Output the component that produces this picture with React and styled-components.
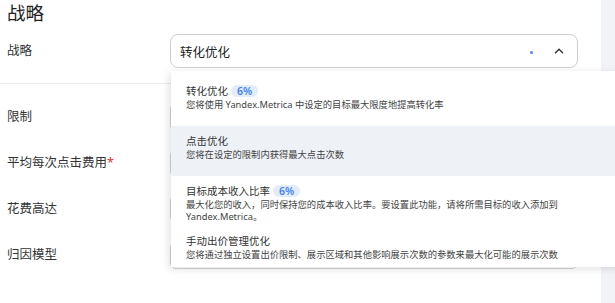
import React from "react";
import styled, { createGlobalStyle } from "styled-components";

const GlobalStyle = createGlobalStyle`
  body {
    margin: 0;
    background: #fff;
    font-family: "Noto Sans", "Noto Sans CJK SC", sans-serif;
    color: #333;
  }
`;

const options = [
  {
    title: "转化优化",
    badge: "6%",
    desc: ["您将使用 Yandex.Metrica 中设定的目标最大限度地提高转化率"],
  },
  {
    title: "点击优化",
    desc: ["您将在设定的限制内获得最大点击次数"],
    active: true,
  },
  {
    title: "目标成本收入比率",
    badge: "6%",
    desc: [
      "最大化您的收入，同时保持您的成本收入比率。要设置此功能，请将所需目标的收入添加到",
      "Yandex.Metrica。",
    ],
  },
  {
    title: "手动出价管理优化",
    desc: ["您将通过独立设置出价限制、展示区域和其他影响展示次数的参数来最大化可能的展示次数"],
  },
];

const fields = [
  { label: "限制" },
  { label: "平均每次点击费用", required: true },
  { label: "花费高达" },
  { label: "归因模型" },
];

const App = () => {
  return (
    <>
      <GlobalStyle />
      <Page>
        <Main>
          <Title>战略</Title>
          <Row>
            <Label>战略</Label>
            <Select>
              <SelectValue>转化优化</SelectValue>
              <Dot />
              <svg width="10" height="6" viewBox="0 0 10 6">
                <path d="M1 5.2 L5 1.2 L9 5.2" fill="none" stroke="#333" strokeWidth="1.4" />
              </svg>
            </Select>
          </Row>
          <Divider />
          <Fields>
            {fields.map((f) => (
              <FieldRow key={f.label}>
                <Label>
                  {f.label}
                  {f.required && <Star>*</Star>}
                </Label>
                <Input />
              </FieldRow>
            ))}
          </Fields>
        </Main>
        <Side />
        <Menu>
          {options.map((o) => (
            <Option key={o.title} active={o.active}>
              <OptionTitle>
                {o.title}
                {o.badge && <Badge>{o.badge}</Badge>}
              </OptionTitle>
              {o.desc.map((d) => (
                <OptionDesc key={d}>{d}</OptionDesc>
              ))}
            </Option>
          ))}
        </Menu>
      </Page>
    </>
  );
};

export default App;

const Page = styled("div")`
  position: relative;
  display: flex;
  width: 615px;
  height: 303px;
  overflow: hidden;
`;

const Main = styled("div")`
  width: 601px;
  box-sizing: border-box;
  padding-left: 7px;
`;

const Side = styled("div")`
  width: 14px;
  background: #f1f3f6;
`;

const Title = styled("h2")`
  margin: 0;
  padding-top: 1px;
  font-size: 18.5px;
  line-height: 24px;
  font-weight: 400;
  color: #222;
`;

const Row = styled("div")`
  display: flex;
  align-items: center;
  margin-top: 9px;
`;

const Label = styled("div")`
  width: 163px;
  font-size: 12.5px;
  line-height: 16px;
  color: #333;
`;

const Star = styled("span")`
  color: #e5352b;
`;

const Select = styled("div")`
  width: 408px;
  height: 34px;
  box-sizing: border-box;
  border: 1px solid #cfcfcf;
  border-radius: 8px;
  display: flex;
  align-items: center;
  padding: 0 13px 0 9px;
`;

const SelectValue = styled("div")`
  flex: 1;
  font-size: 12.5px;
  color: #222;
`;

const Dot = styled("span")`
  width: 3px;
  height: 3px;
  border-radius: 50%;
  background: #4a86f7;
  margin: 2px 21px 0 0;
`;

const Divider = styled("div")`
  height: 1px;
  background: #ececec;
  margin: 15px 0 0 -7px;
`;

const Fields = styled("div")`
  display: flex;
  flex-direction: column;
  padding-top: 10px;
`;

const FieldRow = styled("div")`
  display: flex;
  align-items: center;
  height: 46px;
`;

const Input = styled("div")`
  width: 408px;
  height: 28px;
  box-sizing: border-box;
  border: 1px solid #d4d4d4;
  border-radius: 6px;
`;

const Menu = styled("div")`
  position: absolute;
  top: 71px;
  left: 171px;
  width: 460px;
  height: 196px;
  overflow: hidden;
  background: #fff;
  padding-top: 5px;
  box-sizing: border-box;
  box-shadow: -2px 2px 8px rgba(0, 0, 0, 0.12);
`;

const Option = styled("div")`
  height: 50px;
  box-sizing: border-box;
  padding: 8px 15px 0;
  background: ${(p) => (p.active ? "#eef1f6" : "#fff")};
`;

const OptionTitle = styled("div")`
  display: flex;
  align-items: center;
  height: 14px;
  margin-bottom: 1px;
  font-size: 10.5px;
  line-height: 14px;
  color: #333;
`;

const Badge = styled("span")`
  margin-left: 3px;
  padding: 0 6px;
  height: 12px;
  line-height: 12px;
  border-radius: 6px;
  background: #e2ecfd;
  color: #3f82f5;
  font-weight: 600;
  font-size: 10.5px;
`;

const OptionDesc = styled("div")`
  font-size: 9.3px;
  line-height: 12px;
  color: #444;
  white-space: nowrap;
`;
